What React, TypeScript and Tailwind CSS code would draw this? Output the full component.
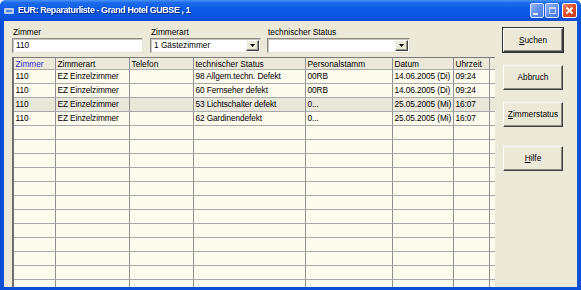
import React from 'react'

const COLS = [
  { label: 'Zimmer', w: 'w-[42px]', blue: true },
  { label: 'Zimmerart', w: 'w-[74px]' },
  { label: 'Telefon', w: 'w-[64px]' },
  { label: 'technischer Status', w: 'w-[112px]' },
  { label: 'Personalstamm', w: 'w-[87px]' },
  { label: 'Datum', w: 'w-[61px]' },
  { label: 'Uhrzeit', w: 'w-[36px]' },
]

const ROWS: { cells: string[]; grey?: boolean }[] = [
  { cells: ['110', 'EZ Einzelzimmer', '', '98 Allgem.techn. Defekt', '00RB', '14.06.2005 (Di)', '09:24'] },
  { cells: ['110', 'EZ Einzelzimmer', '', '60 Fernseher defekt', '00RB', '14.06.2005 (Di)', '09:24'] },
  { cells: ['110', 'EZ Einzelzimmer', '', '53 Lichtschalter defekt', '0...', '25.05.2005 (Mi)', '16:07'], grey: true },
  { cells: ['110', 'EZ Einzelzimmer', '', '62 Gardinendefekt', '0...', '25.05.2005 (Mi)', '16:07'] },
]

const EMPTY_ROWS = 13

function TitleButton({ kind }: { kind: 'min' | 'max' | 'close' }) {
  if (kind === 'close') {
    return (
      <div className="w-[15px] h-[15px] rounded-[2px] border border-white bg-[linear-gradient(135deg,#f08a6a_0%,#e2512c_45%,#c43a16_100%)] flex items-center justify-center">
        <svg width="9" height="9" viewBox="0 0 9 9">
          <path d="M1.5 1.5 L7.5 7.5 M7.5 1.5 L1.5 7.5" stroke="white" strokeWidth="1.8" />
        </svg>
      </div>
    )
  }
  return (
    <div className="w-[14px] h-[15px] rounded-[2px] border border-[#dfe8fb] bg-[linear-gradient(135deg,#93b3f5_0%,#6390ee_50%,#4679e6_100%)] flex items-center justify-center">
      {kind === 'min' ? (
        <div className="w-[5px] h-[2px] bg-[#dbe6fb] mt-[6px] -ml-[3px]" />
      ) : (
        <div className="w-[7px] h-[7px] border border-[#c7d7f8] border-t-2" />
      )}
    </div>
  )
}

function Field({ label, width, value, combo }: { label: string; width: string; value?: string; combo?: boolean }) {
  return (
    <div className={`flex flex-col ${width}`}>
      <div className="h-[12px] leading-[13px] pl-[1px]">{label}</div>
      <div className="h-[15px] bg-white border border-t-[#8a8a8a] border-l-[#8a8a8a] border-b-[#e6e3d6] border-r-[#e6e3d6] shadow-[inset_1px_1px_0_#c8c5b8] flex items-center">
        <span className="flex-1 pl-[3px] leading-[13px] truncate">{value}</span>
        {combo && (
          <div className="w-[13px] h-[11px] mr-[1px] bg-[#ECE9D8] border border-t-white border-l-white border-b-[#404040] border-r-[#404040] shadow-[inset_-1px_-1px_0_#9a978c] flex items-center justify-center">
            <svg width="5" height="3" viewBox="0 0 5 3">
              <path d="M0 0 H5 L2.5 3 Z" fill="black" />
            </svg>
          </div>
        )}
      </div>
    </div>
  )
}

function SideButton({ ul, post, isDefault }: { ul?: string; post: string; isDefault?: boolean }) {
  const inner = (
    <div className="h-full w-full bg-[#ECE9D8] border border-t-white border-l-white border-b-[#404040] border-r-[#404040] shadow-[inset_-1px_-1px_0_#8c8a80] flex items-center justify-center">
      <span>
        {ul && <span className="underline underline-offset-[1px]">{ul}</span>}
        {post}
      </span>
    </div>
  )
  if (isDefault) {
    return <div className="w-[62px] h-[26px] -ml-[1px] border border-[#303030]">{inner}</div>
  }
  return <div className="w-[60px] h-[25px]">{inner}</div>
}

export default function App() {
  return (
    <div className="w-[581px] h-[290px] bg-white overflow-hidden font-['Liberation_Sans',Arial,sans-serif] text-[8.3px] text-black">
      <div className="w-full h-full flex flex-col rounded-t-[6px] overflow-hidden bg-[#0b4ed8]">
        {/* title bar */}
        <div className="h-[21px] shrink-0 flex items-center bg-[linear-gradient(to_bottom,#4a95f7_0%,#1e6cec_12%,#0c5ae6_45%,#0a56e2_80%,#0a4bd0_100%)] pl-[3px] pr-[4px]">
          <svg width="12" height="10" viewBox="0 0 12 10" className="mr-[3px]">
            <rect x="1" y="2" width="10" height="6" rx="1" fill="#b9cdf3" />
            <rect x="3" y="4" width="6" height="2" fill="#4f7fd6" />
          </svg>
          <span className="text-white font-bold text-[9px] tracking-[-0.45px] drop-shadow-[1px_1px_0_#0a2f8a]">
            EUR: Reparaturliste - Grand Hotel GUBSE , 1
          </span>
          <div className="ml-auto flex items-center gap-[1px]">
            <TitleButton kind="min" />
            <TitleButton kind="max" />
            <div className="w-[1px]" />
            <TitleButton kind="close" />
          </div>
        </div>
        {/* client */}
        <div className="flex-1 mx-[4px] bg-[#ECE9D8] flex pl-[8px] pr-[14px] pt-[5px] min-h-0">
          <div className="w-[483px] flex flex-col min-h-0">
            <div className="flex">
              <Field label="Zimmer" width="w-[131px]" value="110" />
              <div className="w-[7px]" />
              <Field label="Zimmerart" width="w-[111px]" value="1 Gästezimmer" combo />
              <div className="w-[6px]" />
              <Field label="technischer Status" width="w-[143px]" combo />
            </div>
            {/* grid */}
            <div className="mt-[4px] flex-1 min-h-0 overflow-hidden bg-[#FDFAEE] border-t border-l-2 border-t-[#7a7a7a] border-l-[#6e6e6e]">
              <div className="flex h-[12px] bg-[#ECE9D8] border-b border-[#a8a8a8]">
                {COLS.map(c => (
                  <div key={c.label} className={`${c.w} shrink-0 border-r border-[#909090] pl-[1.5px] leading-[12px] ${c.blue ? 'text-[#2a2ad8]' : ''}`}>
                    {c.label}
                  </div>
                ))}
                <div className="w-[6px]" />
              </div>
              {ROWS.map((r, i) => (
                <div key={i} className={`flex h-[14px] border-b border-[#a8a8a8] ${r.grey ? 'bg-[#E9E6DA]' : ''}`}>
                  {COLS.map((c, j) => (
                    <div key={c.label} className={`${c.w} shrink-0 border-r border-[#909090] pl-[1.5px] leading-[13px] tracking-[-0.1px] whitespace-nowrap overflow-hidden`}>
                      {r.cells[j]}
                    </div>
                  ))}
                  <div className="w-[6px]" />
                </div>
              ))}
              {Array.from({ length: EMPTY_ROWS }).map((_, i) => (
                <div key={`e${i}`} className="flex h-[14px] border-b border-[#a8a8a8]">
                  {COLS.map(c => (
                    <div key={c.label} className={`${c.w} shrink-0 border-r border-[#909090]`} />
                  ))}
                  <div className="w-[6px]" />
                </div>
              ))}
            </div>
          </div>
          <div className="ml-[8px] flex flex-col pt-[1px]">
            <SideButton ul="S" post="uchen" isDefault />
            <div className="h-[12px]" />
            <SideButton post="Abbruch" />
            <div className="h-[12px]" />
            <SideButton ul="Z" post="immerstatus" />
            <div className="h-[19px]" />
            <SideButton ul="H" post="ilfe" />
          </div>
        </div>
        <div className="h-[3px] shrink-0" />
      </div>
    </div>
  )
}
